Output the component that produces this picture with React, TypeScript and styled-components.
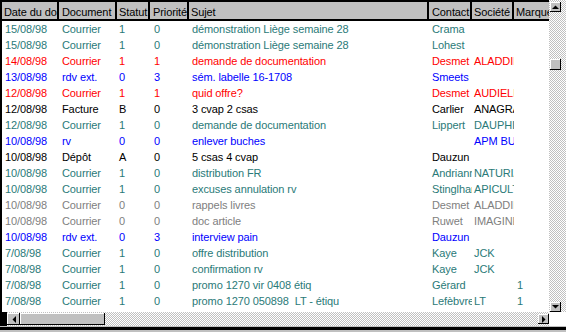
import React from "react";
import styled, { createGlobalStyle } from "styled-components";

const GlobalStyle = createGlobalStyle`
  html, body { margin: 0; padding: 0; background: #c0c0c0; overflow: hidden; }
  body { font-family: "Liberation Sans", Arial, sans-serif; }
`;

const COLS = [57, 58, 33, 39, 240, 43, 42, 60];
const HEAD_PAD = [2, 3, 2, 3, 2, 3, 2, 2];
const DATA_PAD = [3, 3, 2, 4, 3, 3, 2, 3];
const template = COLS.map((c) => `${c}px`).join(" ");

type Tone = "teal" | "red" | "blue" | "black" | "gray";
const TONES: Record<Tone, string> = {
  teal: "#2a7a78",
  red: "#ff0000",
  blue: "#0000ff",
  black: "#000000",
  gray: "#808080",
};

const checker = `repeating-conic-gradient(#c0c0c0 0 25%, #ffffff 0 50%) 0 0 / 2px 2px`;

const Window = styled.div`
  width: 566px;
  height: 332px;
  display: flex;
  flex-direction: column;
  background: #c0c0c0;
  overflow: hidden;
`;

const Main = styled.div`
  display: flex;
  height: 312px;
`;

const Grid = styled.div`
  width: 549px;
  box-sizing: border-box;
  border-top: 2px solid #000;
  border-left: 2px solid #000;
  background: #fff;
  overflow: hidden;
  display: flex;
  flex-direction: column;
`;

const HeaderRow = styled.div`
  display: grid;
  grid-template-columns: ${template};
  height: 19px;
  box-sizing: border-box;
  border-bottom: 2px solid #000;
  background: #c0c0c0;
  flex-shrink: 0;
`;

const HeaderCell = styled.div<{ $pad: number }>`
  box-sizing: border-box;
  border-right: 2px solid #000;
  background: #c0c0c0;
  padding-left: ${(p) => p.$pad}px;
  padding-top: 3px;
  font-size: 11px;
  letter-spacing: -0.1px;
  line-height: 14px;
  color: #000;
  white-space: nowrap;
  overflow: hidden;
`;

const Row = styled.div<{ $tone: Tone }>`
  display: grid;
  grid-template-columns: ${template};
  height: 16px;
  flex-shrink: 0;
  color: ${(p) => TONES[p.$tone]};
  font-size: 11px;
  letter-spacing: -0.1px;
  line-height: 16px;
`;

const Cell = styled.div<{ $pad: number }>`
  padding-left: ${(p) => p.$pad}px;
  white-space: pre;
  overflow: hidden;
`;

const VScroll = styled.div`
  width: 17px;
  display: flex;
  flex-direction: column;
  align-items: flex-start;
  padding: 2px 0 0 1px;
  box-sizing: border-box;
  background: ${checker};
`;

const Raised = styled.div<{ $w: number; $h: number }>`
  width: ${(p) => p.$w}px;
  height: ${(p) => p.$h}px;
  flex-shrink: 0;
  box-sizing: border-box;
  background: #c0c0c0;
  box-shadow: inset -1px -1px #000, inset 1px 1px #fff;
  display: flex;
  align-items: center;
  justify-content: center;
`;

const VThumb = styled(Raised)`
  margin-top: 47px;
`;

const DownButton = styled(Raised)`
  margin-top: auto;
`;

const HBar = styled.div`
  height: 14px;
  display: flex;
  align-items: center;
  background: ${checker};
`;

const LeftCap = styled.div`
  width: 7px;
  align-self: stretch;
  background: #000;
`;

const Spacer = styled.div`
  flex: 1;
`;

const Corner = styled.div`
  width: 17px;
  align-self: stretch;
  background: #fff;
`;

const Footer = styled.div`
  height: 6px;
  padding-top: 1px;
  box-sizing: border-box;
  background: #c0c0c0;
`;

const FooterLine = styled.div`
  height: 3px;
  background: #000;
`;

const Arrow = ({ dir }: { dir: "up" | "down" | "left" | "right" }) => {
  const pts =
    dir === "up"
      ? "0,4 3.5,0.5 7,4"
      : dir === "down"
      ? "0,0 7,0 3.5,3.5"
      : dir === "left"
      ? "4,0 4,7 0.5,3.5"
      : "0,0 0,7 3.5,3.5";
  const horiz = dir === "left" || dir === "right";
  return (
    <svg width={horiz ? 4 : 7} height={horiz ? 7 : 4} viewBox={horiz ? "0 0 4 7" : "0 0 7 4"}>
      <polygon points={pts} fill="#000" />
    </svg>
  );
};

type Rec = { t: Tone; c: string[] };
const rows: Rec[] = [
  { t: "teal", c: ["15/08/98", "Courrier", "1", "0", "démonstration Liège semaine 28", "Crama", "", ""] },
  { t: "teal", c: ["15/08/98", "Courrier", "1", "0", "démonstration Liège semaine 28", "Lohest", "", ""] },
  { t: "red", c: ["14/08/98", "Courrier", "1", "1", "demande de documentation", "Desmet", "ALADDIN", ""] },
  { t: "blue", c: ["13/08/98", "rdv ext.", "0", "3", "sém. labelle 16-1708", "Smeets", "", ""] },
  { t: "red", c: ["12/08/98", "Courrier", "1", "1", "quid offre?", "Desmet", "AUDIELEC", ""] },
  { t: "black", c: ["12/08/98", "Facture", "B", "0", "3 cvap 2 csas", "Carlier", "ANAGRAM", ""] },
  { t: "teal", c: ["12/08/98", "Courrier", "1", "0", "demande de documentation", "Lippert", "DAUPHIN", ""] },
  { t: "blue", c: ["10/08/98", "rv", "0", "0", "enlever buches", "", "APM BUREAU", ""] },
  { t: "black", c: ["10/08/98", "Dépôt", "A", "0", "5 csas 4 cvap", "Dauzun", "", ""] },
  { t: "teal", c: ["10/08/98", "Courrier", "1", "0", "distribution FR", "Andrianne", "NATURIA", ""] },
  { t: "teal", c: ["10/08/98", "Courrier", "1", "0", "excuses annulation rv", "Stinglhamber", "APICULTURE", ""] },
  { t: "gray", c: ["10/08/98", "Courrier", "0", "0", "rappels livres", "Desmet", "ALADDIN", ""] },
  { t: "gray", c: ["10/08/98", "Courrier", "0", "0", "doc article", "Ruwet", "IMAGINE", ""] },
  { t: "blue", c: ["10/08/98", "rdv ext.", "0", "3", "interview pain", "Dauzun", "", ""] },
  { t: "teal", c: ["7/08/98", "Courrier", "1", "0", "offre distribution", "Kaye", "JCK", ""] },
  { t: "teal", c: ["7/08/98", "Courrier", "1", "0", "confirmation rv", "Kaye", "JCK", ""] },
  { t: "teal", c: ["7/08/98", "Courrier", "1", "0", "promo 1270 vir 0408 étiq", "Gérard", "", "1"] },
  { t: "teal", c: ["7/08/98", "Courrier", "1", "0", "promo 1270 050898  LT - étiqu", "Lefèbvre", "LT", "1"] },
  { t: "black", c: ["7/08/98", "Facture", "B", "0", "- 2 csas", "Leclercq", "EUROPA", "1"] },
];

const headers = ["Date du dossier", "Document", "Statut", "Priorité", "Sujet", "Contact", "Société", "Marque"];

export default function App() {
  return (
    <>
      <GlobalStyle />
      <Window>
        <Main>
          <Grid>
            <HeaderRow>
              {headers.map((h, i) => (
                <HeaderCell key={h} $pad={HEAD_PAD[i]}>
                  {h}
                </HeaderCell>
              ))}
            </HeaderRow>
            {rows.map((r, ri) => (
              <Row key={ri} $tone={r.t}>
                {r.c.map((v, ci) => (
                  <Cell key={ci} $pad={DATA_PAD[ci]}>
                    {v}
                  </Cell>
                ))}
              </Row>
            ))}
          </Grid>
          <VScroll>
            <Raised $w={11} $h={10}>
              <Arrow dir="up" />
            </Raised>
            <VThumb $w={11} $h={11} />
            <DownButton $w={11} $h={10}>
              <Arrow dir="down" />
            </DownButton>
          </VScroll>
        </Main>
        <HBar>
          <LeftCap />
          <Raised $w={13} $h={12}>
            <Arrow dir="left" />
          </Raised>
          <Raised $w={85} $h={12} />
          <Spacer />
          <Raised $w={11} $h={10}>
            <Arrow dir="right" />
          </Raised>
          <Corner />
        </HBar>
        <Footer>
          <FooterLine />
        </Footer>
      </Window>
    </>
  );
}
